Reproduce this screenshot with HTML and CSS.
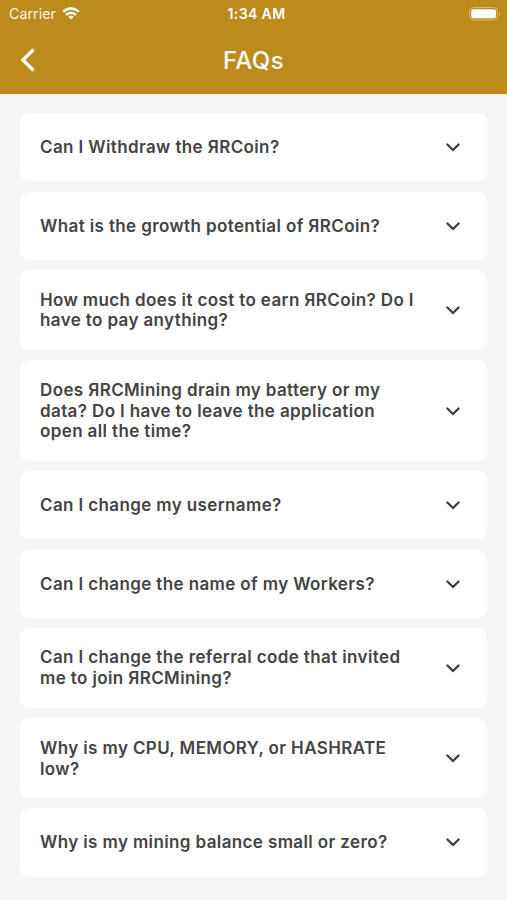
FILE: index.html
```html
<!DOCTYPE html>
<html lang="en">
<head>
<meta charset="utf-8">
<title>FAQs</title>
<link rel="stylesheet" href="styles.css">
</head>
<body>
<svg class="defs" width="0" height="0"><symbol id="chevron" viewBox="0 0 16 10"><path d="M2.4 2.5L8 8L13.6 2.5" fill="none" stroke="currentColor" stroke-width="2.3" stroke-linecap="round" stroke-linejoin="miter"/></symbol></svg>
<header class="header">
  <div class="status">
    <span class="carrier"><span class="carrier-name">Carrier</span>
      <svg class="wifi" viewBox="0 0 18 13" width="18" height="13" fill="none" stroke="#fff" stroke-width="2.5"><path d="M1.2 4.6Q9-1.8 16.8 4.6M4 7.9Q9 3.6 14 7.9"/><path d="M6.3 9.8Q9 7.6 11.7 9.8L9 12.6Z" fill="#fff" stroke="none"/></svg>
    </span>
    <span class="time">1:34 AM</span>
    <svg class="battery" viewBox="0 0 32 14" width="32" height="14"><rect x=".5" y=".5" width="28" height="12.4" rx="4" fill="none" stroke="#fff" stroke-opacity=".4"/><rect x="2.2" y="2.2" width="24.8" height="9" rx="2" fill="#fff"/><path d="M30 4.7Q32 6.7 30 8.8Z" fill="#fff" fill-opacity=".5"/></svg>
  </div>
  <div class="nav">
    <svg class="back" viewBox="0 0 16 26" width="16" height="26"><path d="M13.5 2.5L3 13L13.5 23.5" fill="none" stroke="#fff" stroke-width="3.4"/></svg>
    <h1 class="title">FAQs</h1>
  </div>
</header>
<main class="list">
  <section class="card"><h2 class="question">Can I Withdraw the ЯRCoin?</h2><svg class="chevron"><use href="#chevron"/></svg></section>
  <section class="card"><h2 class="question">What is the growth potential of ЯRCoin?</h2><svg class="chevron"><use href="#chevron"/></svg></section>
  <section class="card two"><h2 class="question">How much does it cost to earn ЯRCoin? Do I<br>have to pay anything?</h2><svg class="chevron"><use href="#chevron"/></svg></section>
  <section class="card three"><h2 class="question">Does ЯRCMining drain my battery or my<br>data? Do I have to leave the application<br>open all the time?</h2><svg class="chevron"><use href="#chevron"/></svg></section>
  <section class="card"><h2 class="question">Can I change my username?</h2><svg class="chevron"><use href="#chevron"/></svg></section>
  <section class="card"><h2 class="question">Can I change the name of my Workers?</h2><svg class="chevron"><use href="#chevron"/></svg></section>
  <section class="card two"><h2 class="question">Can I change the referral code that invited<br>me to join ЯRCMining?</h2><svg class="chevron"><use href="#chevron"/></svg></section>
  <section class="card two"><h2 class="question">Why is my CPU, MEMORY, or HASHRATE<br>low?</h2><svg class="chevron"><use href="#chevron"/></svg></section>
  <section class="card"><h2 class="question">Why is my mining balance small or zero?</h2><svg class="chevron"><use href="#chevron"/></svg></section>
</main>
</body>
</html>
```
FILE: styles.css
```css
* { box-sizing: border-box; }
body { margin: 0; height: 900px; overflow: hidden; background: #f5f5f5; font-family: Inter, "Liberation Sans", sans-serif; }
.defs { display: block; }
.header { height: 94px; background: #bd8b1b; color: #fff; }
.status { height: 27px; padding: 0 6px 0 9px; display: grid; grid-template-columns: 1fr auto 1fr; align-items: center; }
.carrier { display: flex; align-items: center; gap: 6px; font-size: 14.3px; }
.carrier-name { opacity: .9; }
.time { padding-left: 3px; font-size: 14px; font-weight: 600; letter-spacing: .4px; }
.battery { justify-self: end; }
.nav { height: 66px; padding: 0 20px; display: grid; grid-template-columns: 16px 1fr 16px; align-items: center; }
.title { margin: 0; text-align: center; font-size: 24px; font-weight: 500; letter-spacing: .4px; }
.list { padding: 19.3px 20px 0; display: flex; flex-direction: column; gap: 10.1px; }
.card { height: 68.2px; padding: 0 26px 0 20px; display: flex; align-items: center; justify-content: space-between; background: #fff; border-radius: 9px; color: #444; }
.two { height: 80.2px; }
.three { height: 101px; }
.question { margin: 0; padding-top: .8px; font-size: 17px; line-height: 20.8px; font-weight: 600; letter-spacing: .38px; white-space: nowrap; }
.chevron { width: 16px; height: 10px; flex: none; color: #3c3c3c; }
```
